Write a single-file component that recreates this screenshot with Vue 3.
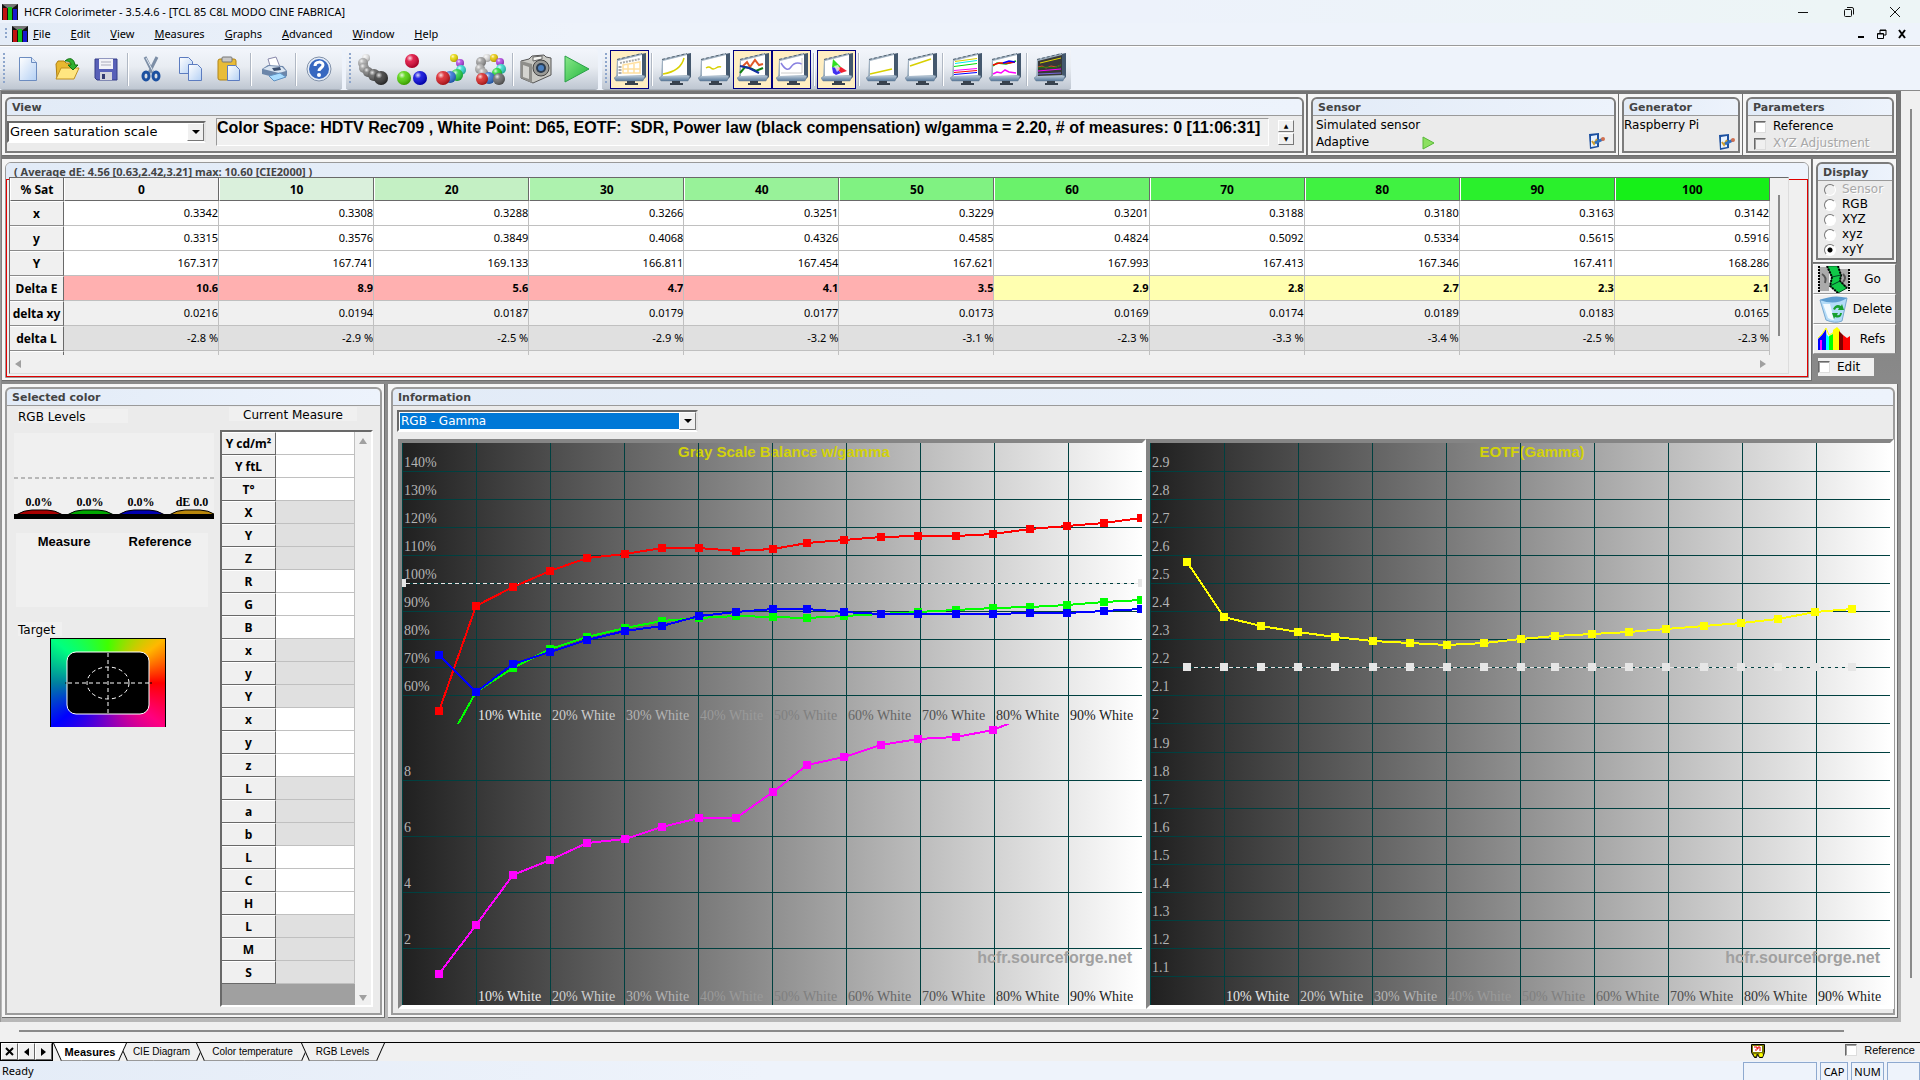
<script setup>
import { ref } from 'vue'

const menus = ['File', 'Edit', 'View', 'Measures', 'Graphs', 'Advanced', 'Window', 'Help']

const fileTools = ['new', 'open', 'save', '|', 'cut', 'copy', 'paste', '|', 'print', '|', 'help']
const measureTools = ['grays', 'primaries', 'secondaries', 'ring', '|', 'camera', 'play']
const graphTools = [
  { k: 'table', on: true }, { k: '|' }, { k: 'luminance' }, { k: 'gamma' },
  { k: 'levels', on: true }, { k: 'temperature', on: true }, { k: '|' },
  { k: 'cie', on: true }, { k: '|' }, { k: 'near black' }, { k: 'near white' }, { k: '|' },
  { k: 'saturation' }, { k: 'shift' }, { k: '|' }, { k: 'combined' },
]

const ball = {
  grays: [[8, 5, 4, '#e4e4e4'], [5, 10, 5, '#aaa'], [6, 15, 5, '#999'], [10, 19, 5, '#777'], [16, 22, 6, '#5a5a5a'], [23, 25, 7, '#333']],
  primaries: [[15, 8, 7, '#dc0032'], [7, 25, 7, '#4cd000'], [23, 25, 7, '#0000dc']],
  secondaries: [[18, 5, 4, '#e8d800'], [24, 10, 4, '#b040e0'], [25, 17, 5, '#30d8d0'], [21, 22, 6, '#20d040'], [14, 24, 6, '#2c70d8'], [7, 25, 7, '#d81820']],
  ring: [[12, 5, 4, '#ddd'], [19, 5, 4, '#e8c800'], [25, 9, 4, '#b040e0'], [6, 9, 5, '#999'], [5, 16, 5, '#aaa'], [26, 16, 5, '#30d8c8'], [8, 20, 5, '#aaa'], [22, 20, 5, '#20d830'], [14, 25, 6, '#3070d0'], [7, 26, 6, '#d82020'], [24, 26, 6, '#666']],
}

const sat = ['0', '10', '20', '30', '40', '50', '60', '70', '80', '90', '100']
const satColor = ['#f0f0f0', '#daf0dc', '#c4f0c4', '#adf2ae', '#98f299', '#80f282', '#6af26b', '#54f255', '#40f241', '#2af02c', '#16f018']
const dataRows = [
  { h: 'x', c: 'plain', v: ['0.3342', '0.3308', '0.3288', '0.3266', '0.3251', '0.3229', '0.3201', '0.3188', '0.3180', '0.3163', '0.3142'] },
  { h: 'y', c: 'plain', v: ['0.3315', '0.3576', '0.3849', '0.4068', '0.4326', '0.4585', '0.4824', '0.5092', '0.5334', '0.5615', '0.5916'] },
  { h: 'Y', c: 'plain', v: ['167.317', '167.741', '169.133', '166.811', '167.454', '167.621', '167.993', '167.413', '167.346', '167.411', '168.286'] },
  { h: 'Delta E', c: 'delta', v: ['10.6', '8.9', '5.6', '4.7', '4.1', '3.5', '2.9', '2.8', '2.7', '2.3', '2.1'] },
  { h: 'delta xy', c: 'light', v: ['0.0216', '0.0194', '0.0187', '0.0179', '0.0177', '0.0173', '0.0169', '0.0174', '0.0189', '0.0183', '0.0165'] },
  { h: 'delta L', c: 'dark', v: ['-2.8 %', '-2.9 %', '-2.5 %', '-2.9 %', '-3.2 %', '-3.1 %', '-2.3 %', '-3.3 %', '-3.4 %', '-2.5 %', '-2.3 %'] },
]

const display = ref('xyY')
const displayModes = ['Sensor', 'RGB', 'XYZ', 'xyz', 'xyY']

const measureRows = ['Y cd/m²', 'Y ftL', 'T°', 'X', 'Y', 'Z', 'R', 'G', 'B', 'x', 'y', 'Y', 'x', 'y', 'z', 'L', 'a', 'b', 'L', 'C', 'H', 'L', 'M', 'S']

const humps = [
  { x: 2, c: '#a80000', t: '0.0%' }, { x: 53, c: '#00a800', t: '0.0%' },
  { x: 104, c: '#0000b0', t: '0.0%' }, { x: 155, c: '#b8860b', t: 'dE 0.0' },
]

const xs = [37, 74, 111, 148, 185, 223, 260, 297, 334, 371, 405, 442, 479, 516, 554, 591, 628, 665, 702, 739]
const toPoints = (ys) => ys.map((y, i) => [xs[i], y])
const series = [
  { name: 'green', color: '#00ff00', clip: 'upper', p: toPoints([315, 249, 225, 206, 194, 185, 178, 175, 173, 174, 175, 173, 171, 169, 167, 165, 164, 162, 159, 157]) },
  { name: 'red', color: '#ff0000', clip: 'upper', p: toPoints([268, 163, 144, 128, 115, 111, 105, 105, 108, 106, 100, 97, 94, 93, 93, 91, 86, 83, 80, 75]) },
  { name: 'blue', color: '#0000ff', clip: 'upper', p: toPoints([212, 249, 221, 209, 197, 188, 183, 173, 169, 166, 166, 169, 171, 171, 171, 171, 170, 170, 168, 166]) },
  { name: 'delta', color: '#ff00ff', clip: 'lower', p: toPoints([531, 482, 432, 417, 400, 396, 384, 375, 375, 349, 322, 314, 302, 296, 294, 287, 272]) },
]
const gamma = toPoints([119, 174, 183, 189, 194, 198, 200, 202, 200, 196, 193, 191, 189, 186, 183, 180, 176, 169, 166])
const line = (p) => p.map((q) => q.join(',')).join(' ')

const percents = ['140%', '130%', '120%', '110%', '100%', '90%', '80%', '70%', '60%']
const deltas = ['8', '6', '4', '2']
const gammas = Array.from({ length: 19 }, (_, i) => String((29 - i) / 10))
const white = ['#e6e6e6', '#cdcdcd', '#b4b4b4', '#9a9a9a', '#808080', '#666', '#4d4d4d', '#333', '#1a1a1a']

const tabs = [
  { t: 'Measures', w: 74 }, { t: 'CIE Diagram', w: 85 },
  { t: 'Color temperature', w: 113 }, { t: 'RGB Levels', w: 83 },
]
</script>

<template>
  <div class="app">
    <svg class="defs" width="0" height="0" aria-hidden="true">
      <defs>
        <linearGradient id="bezel" x1="0" y1="0" x2="0" y2="1">
          <stop offset="0" stop-color="#c6d3df" /><stop offset="1" stop-color="#56779a" />
        </linearGradient>
        <linearGradient id="paper" x1="0" y1="0" x2="1" y2="1">
          <stop offset="0" stop-color="#fff" /><stop offset="1" stop-color="#b4d0f4" />
        </linearGradient>
        <linearGradient id="grayramp">
          <stop offset="0" stop-color="#202020" /><stop offset="1" stop-color="#fff" />
        </linearGradient>
        <linearGradient id="leaf" x1="0" y1="0" x2="1" y2="1">
          <stop offset="0" stop-color="#8ae88a" /><stop offset="1" stop-color="#1fb43a" />
        </linearGradient>
        <radialGradient id="shine" cx=".35" cy=".3" r=".7">
          <stop offset="0" stop-color="#fff" stop-opacity=".85" /><stop offset=".35" stop-color="#fff" stop-opacity=".15" />
          <stop offset="1" stop-color="#000" stop-opacity=".25" />
        </radialGradient>
      </defs>
    </svg>

    <header class="titlebar">
      <svg class="logo" width="16" height="16" viewBox="0 0 16 16"><rect width="16" height="16" fill="#111" /><path d="M0 0h16L8 6z" fill="#777" /><rect x="1" y="4" width="4" height="12" fill="#c01010" /><rect x="6" y="3" width="4" height="13" fill="#10c020" /><rect x="11" y="5" width="4" height="11" fill="#1818d0" /></svg>
      <span class="grow">HCFR Colorimeter - 3.5.4.6 - [TCL 85 C8L MODO CINE FABRICA]</span>
      <div class="winbtns">
        <button aria-label="Minimize"><svg width="12" height="12"><path d="M1 6.5h10" stroke="#111" /></svg></button>
        <button aria-label="Restore"><svg width="12" height="12"><rect x="1.5" y="3.5" width="7" height="7" rx="1" fill="none" stroke="#111" /><path d="M4 1.5h5q1.5 0 1.5 1.5v5.5" fill="none" stroke="#111" /></svg></button>
        <button aria-label="Close"><svg width="12" height="12"><path d="M1 1l10 10M11 1L1 11" stroke="#111" /></svg></button>
      </div>
    </header>

    <nav class="menubar">
      <i class="grip short"></i>
      <svg class="logo" width="16" height="16" viewBox="0 0 16 16"><rect width="16" height="16" fill="#111" /><path d="M0 0h16L8 6z" fill="#777" /><rect x="1" y="4" width="4" height="12" fill="#c01010" /><rect x="6" y="3" width="4" height="13" fill="#10c020" /><rect x="11" y="5" width="4" height="11" fill="#1818d0" /></svg>
      <button v-for="m in menus" :key="m" class="menu"><u>{{ m[0] }}</u>{{ m.slice(1) }}</button>
      <span class="grow"></span>
      <div class="mdi">
        <button aria-label="Minimize document"><svg width="10" height="10"><path d="M1 8h6" stroke="#000" stroke-width="2" /></svg></button>
        <button aria-label="Restore document"><svg width="10" height="10"><path d="M3 4V1h6v5H7M3 1.5h6" stroke="#000" fill="none" /><path d="M.5 4.5h6v5h-6zM.5 5h6" stroke="#000" fill="none" /></svg></button>
        <button aria-label="Close document"><svg width="10" height="10"><path d="M2 1l6 8M8 1L2 9" stroke="#000" stroke-width="2" /></svg></button>
      </div>
    </nav>

    <div class="toolrow">
      <div class="band">
        <i class="grip"></i>
        <template v-for="(k, i) in fileTools" :key="i">
          <i v-if="k === '|'" class="sep"></i>
          <button v-else class="tool" :aria-label="k">
            <svg width="26" height="26" viewBox="0 0 26 26">
              <g v-if="k === 'new'"><path d="M4.5 1.5h12l5 5v18h-17z" fill="url(#paper)" stroke="#6c8cc0" /><path d="M16.5 1.5v5h5" fill="#dbe8fa" stroke="#6c8cc0" /></g>
              <g v-else-if="k === 'open'"><path d="M2 8l2-3h6l2 2h8v15H3z" fill="#e8b830" stroke="#b08010" /><path d="M2 23l5-11h18l-5 11z" fill="#ffe680" stroke="#c09020" /><path d="M11 5c4-4 9-3 10 4h3l-5 5-5-5h3c0-3-2-4-6-4z" fill="#30b030" stroke="#107010" /></g>
              <g v-else-if="k === 'save'"><path d="M2 3h22v21H4l-2-2z" fill="#5860b8" stroke="#343c88" /><rect x="6" y="3" width="14" height="10" fill="#f2f2f8" /><path d="M8 6h10M8 9h10" stroke="#aab" /><rect x="7" y="16" width="12" height="8" fill="#d4d4dc" /><rect x="9" y="18" width="3" height="5" fill="#333a70" /></g>
              <g v-else-if="k === 'cut'" fill="none"><path d="M7 1l8 16M19 1l-8 16" stroke="#7c8ea6" stroke-width="3" /><path d="M8 2l8 15" stroke="#dde6f0" /><ellipse cx="8" cy="20" rx="3" ry="4" stroke="#1c50a0" stroke-width="3" /><ellipse cx="18" cy="20" rx="3" ry="4" stroke="#1c50a0" stroke-width="3" /></g>
              <g v-else-if="k === 'copy'" stroke="#5c7cc0"><path d="M2.5 1.5h9l4 4v12h-13z" fill="url(#paper)" /><path d="M11.5 8.5h9l4 4v12h-13z" fill="url(#paper)" /></g>
              <g v-else-if="k === 'paste'"><rect x="2" y="3" width="18" height="21" rx="2" fill="#e8bc38" stroke="#b08418" /><rect x="6" y="1" width="10" height="5" rx="1" fill="#c8c8c8" stroke="#777" /><path d="M11.5 9.5h8l4 4v11h-12z" fill="url(#paper)" stroke="#5c7cc0" /></g>
              <g v-else-if="k === 'print'"><path d="M7 3l8-2 4 10-9 2z" fill="#fff" stroke="#88a" /><path d="M1 13l6-4 15 1 4 5v5l-6 3-19-5z" fill="#6c86aa" /><path d="M2 13l6-3 13 1 4 4-7 2z" fill="#dbe6f2" /><path d="M11 12l8-1 1 3-7 1z" fill="#3c5070" /><path d="M8 20l11-3 6 4-12 4z" fill="#a8dcff" stroke="#6090c0" /></g>
              <g v-else><circle cx="13" cy="13" r="12" fill="#e6edf7" stroke="#8090a8" /><circle cx="13" cy="13" r="10" fill="#3868c0" /><path d="M9 10c0-5 8-5 8-1 0 3-4 3-4 6" fill="none" stroke="#fff" stroke-width="3" /><circle cx="13" cy="19" r="2" fill="#fff" /></g>
            </svg>
          </button>
        </template>
      </div>
      <div class="band">
        <i class="grip"></i>
        <template v-for="(k, i) in measureTools" :key="i">
          <i v-if="k === '|'" class="sep"></i>
          <button v-else class="tool" :aria-label="k">
            <svg width="32" height="32" viewBox="0 0 32 32">
              <g v-if="ball[k]"><template v-for="(b, j) in ball[k]" :key="j"><circle :cx="b[0]" :cy="b[1]" :r="b[2]" :fill="b[3]" /><circle :cx="b[0]" :cy="b[1]" :r="b[2]" fill="url(#shine)" /></template></g>
              <g v-else-if="k === 'camera'"><path d="M1 8l8-2 3-3 12-1 2 2 5 1v17l-18 8-12-5z" fill="#c9c9c4" stroke="#555" /><path d="M1 8l11 3v19L1 25z" fill="#8e8e8a" /><path d="M3 12l6 2v12l-6-2z" fill="#d4d4d0" /><path d="M13 4l9-1v3l-9 2z" fill="#f4f4f0" stroke="#666" /><circle cx="21" cy="15" r="8" fill="#9a9a96" stroke="#444" /><circle cx="21" cy="15" r="5" fill="#2c3c50" /><circle cx="21" cy="15" r="3" fill="#4a80c0" /></g>
              <path v-else d="M6 3l24 13L6 29z" fill="url(#leaf)" stroke="#2aa048" />
            </svg>
          </button>
        </template>
      </div>
      <div class="band">
        <i class="grip"></i>
        <template v-for="(g, i) in graphTools" :key="i">
          <i v-if="g.k === '|'" class="sep"></i>
          <button v-else class="tool" :class="{ on: g.on }" :aria-label="g.k + ' graph'">
            <svg width="32" height="32" viewBox="0 0 32 32">
              <path d="M27 1l5-1v24l-4 4z" fill="#44586e" />
              <path d="M3 6l25-6v24l-26 2z" fill="#9fb0c0" />
              <path d="M3 6.5L28 .5" stroke="#566573" stroke-dasharray="3 2" />
              <path d="M0 25l4-3h24l3 1-2 5H2z" fill="url(#bezel)" stroke="#6a8097" stroke-width=".5" />
              <path d="M13 28h8v2h3v2H11v-2h2z" fill="#38424e" />
              <path d="M4 8l24-6v20l-24 1z" :fill="g.k === 'combined' ? '#383838' : '#fff'" />
              <g fill="none" stroke-width="1.5">
                <g v-if="g.k === 'table'"><path d="M6 10l20-4" stroke="#aaa" stroke-width="2" stroke-dasharray="2 1" /><path d="M6 13v8" stroke="#aaa" stroke-width="3" stroke-dasharray="2 1" /><path d="M9 12l17-3v11H9zM9 16h17M14 11v9M20 10v10" stroke="#ffdfa0" /></g>
                <path v-else-if="g.k === 'luminance'" d="M4 21q18-3 21-16" stroke="#d8d000" />
                <path v-else-if="g.k === 'gamma'" d="M8 15q3-2 5 0t5 0 5-1" stroke="#d8d000" />
                <g v-else-if="g.k === 'levels'" stroke-width="2"><path d="M3 20l5-6 5 1 6 3 7-3" stroke="#108010" /><path d="M5 14l5-5 3 5 5-7 4 5 4-1" stroke="#e05828" /><path d="M3 13l9 2 10 5" stroke="#1030a0" /></g>
                <g v-else-if="g.k === 'temperature'"><path d="M5 10q6 10 10 4t11-3" stroke="#8880e0" /><path d="M5 20h21V5" stroke="#ccc" stroke-width="1" /></g>
                <g v-else-if="g.k === 'cie'" stroke="none"><path d="M12 6l8 8-5 1-4-1z" fill="#30e020" /><path d="M20 14l6 4-6 2-5-5z" fill="#f02030" /><path d="M11 14l4 1 5 5-5 2-3-2z" fill="#4030f0" /><path d="M13 13l4-1 2 4-3 3z" fill="#fff" opacity=".7" /></g>
                <path v-else-if="g.k === 'near black'" d="M4 21l22-5" stroke="#d8d000" />
                <path v-else-if="g.k === 'near white'" d="M5 13l21-7" stroke="#d8d000" />
                <g v-else-if="g.k === 'saturation'" stroke-width="1"><path d="M5 8.5l22-3" stroke="#d8d000" /><path d="M5 10.5l22-3" stroke="#0ee" /><path d="M4 13.5l23-3" stroke="#0d0" /><path d="M4 17.5l23-2" stroke="#f0f" /><path d="M4 19.5l23-2" stroke="#f00" /><path d="M4 21.5l23-2" stroke="#00f" /></g>
                <g v-else-if="g.k === 'shift'"><path d="M4 13l4-3 9 1 10-3" stroke="#0c0" /><path d="M4 12l6-2h10l6-1" stroke="#f00" /><path d="M14 10l6-2 6 1" stroke="#00f" /><path d="M4 21l4-2 4 1 4-3 4 2 7 1" stroke="#f0f" /></g>
                <g v-else stroke-width="1"><path d="M6 10l21-5" stroke="#e0d800" /><path d="M4 14l4-1 4 2 5-2 5 1 5-2" stroke="#d05020" /><path d="M4 15l8-1 8 1 7-3" stroke="#108010" /><path d="M4 18l23-2" stroke="#f0f" /><path d="M4 21l23-1" stroke="#7868e0" /></g>
              </g>
            </svg>
          </button>
        </template>
      </div>
    </div>

    <div class="work">
      <div class="desk">
        <main class="panes">
          <div class="row top">
            <section class="frame grow">
              <div class="group">
                <h2>View</h2>
                <div class="viewbody">
                  <div class="combo"><select aria-label="View"><option>Green saturation scale</option></select><i></i></div>
                  <output class="status">Color Space: HDTV Rec709 , White Point: D65, EOTF:&nbsp; SDR, Power law (black compensation) w/gamma = 2.20, # of measures: 0 [11:06:31]</output>
                  <div class="spin"><button aria-label="Previous">▲</button><button aria-label="Next">▼</button></div>
                </div>
              </div>
            </section>
            <section class="frame sensor">
              <div class="group">
                <h2>Sensor</h2>
                <div class="lines"><p>Simulated sensor</p><p>Adaptive<svg class="go" width="14" height="14"><path d="M1 1l11 6-11 6z" fill="#8ce060" stroke="#58b838" /></svg></p></div>
                <button class="cfg" aria-label="Configure sensor"><svg width="18" height="18"><path d="M2 2l10-1v14l-9 2z" fill="#1c50a0" /><path d="M4 4l6-1v11l-6 1z" fill="#e8f2ff" /><path d="M5 9l2 3 3-5" stroke="#d0a030" stroke-width="2" fill="none" /><path d="M8 11l8-4" stroke="#3070c0" stroke-width="3" /><circle cx="16" cy="7" r="2" fill="#d07050" /></svg></button>
              </div>
            </section>
            <section class="frame generator">
              <div class="group">
                <h2>Generator</h2>
                <div class="lines tight"><p>Raspberry Pi</p></div>
                <button class="cfg" aria-label="Configure generator"><svg width="18" height="18"><path d="M2 2l10-1v14l-9 2z" fill="#1c50a0" /><path d="M4 4l6-1v11l-6 1z" fill="#e8f2ff" /><path d="M5 9l2 3 3-5" stroke="#d0a030" stroke-width="2" fill="none" /><path d="M8 11l8-4" stroke="#3070c0" stroke-width="3" /><circle cx="16" cy="7" r="2" fill="#d07050" /></svg></button>
              </div>
            </section>
            <section class="frame params">
              <div class="group">
                <h2>Parameters</h2>
                <div class="checks">
                  <label><input type="checkbox" />Reference</label>
                  <label class="off"><input type="checkbox" disabled />XYZ Adjustment</label>
                </div>
              </div>
            </section>
          </div>

          <div class="row center">
            <section class="frame grow">
              <div class="group thin">
                <h2>( Average dE: 4.56 [0.63,2.42,3.21] max: 10.60 [CIE2000] )</h2>
                <div class="redbox">
                  <div class="gridbox">
                    <div class="gridmain">
                      <table class="data">
                        <thead>
                          <tr><th class="rh">% Sat</th><th v-for="(s, i) in sat" :key="s" :style="{ background: satColor[i] }">{{ s }}</th></tr>
                        </thead>
                        <tbody>
                          <tr v-for="r in dataRows" :key="r.h" :class="r.c">
                            <th>{{ r.h }}</th>
                            <td v-for="(v, i) in r.v" :key="i" :class="{ warn: r.c === 'delta' && i > 5 }">{{ v }}</td>
                          </tr>
                          <tr class="light stub"><th></th><td v-for="s in sat" :key="s"></td></tr>
                        </tbody>
                      </table>
                      <div class="hbar"><i class="al"></i><i class="ar"></i></div>
                    </div>
                    <div class="vbar"><i></i></div>
                  </div>
                </div>
              </div>
            </section>
            <aside class="side">
              <section class="frame">
                <div class="group">
                  <h2>Display</h2>
                  <div class="radios">
                    <label v-for="d in displayModes" :key="d" :class="{ off: d === 'Sensor' }"><input v-model="display" type="radio" name="display" :value="d" :disabled="d === 'Sensor'" />{{ d }}</label>
                  </div>
                </div>
              </section>
              <button class="act"><svg width="32" height="27" viewBox="0 0 32 27"><path d="M1 1h10v24H1z" fill="#aaa" /><path d="M22 3h9v20h-9z" fill="#aaa" /><path d="M1 0v26M31 3v22" stroke="#000" stroke-width="2" stroke-dasharray="2 1" /><path d="M4 8q5 3 3 9M25 8q4 4 0 8" stroke="#555" fill="none" stroke-width="2" /><path d="M9 0h11l3 9-1 6 7 7-9 5-8-7 2-9z" fill="#10c848" stroke="#052" /><path d="M9 0l5 11-2 9 8 7M20 0l3 9-1 6 7 7" fill="none" stroke="#000" stroke-width="2" stroke-dasharray="2 1" /><path d="M14 11l9-2M12 20l10-5" stroke="#042" /></svg><span>Go</span></button>
              <button class="act"><svg width="32" height="27" viewBox="0 0 32 27"><path d="M2 4l6 20q9 4 16 1l5-23z" fill="#b4dcf8" stroke="#78a8d0" /><path d="M2 4Q16-2 29 2q-12 8-27 2z" fill="#5c9cd0" /><path d="M5 8l5 14q3 2 6 2L12 8z" fill="#f2faff" /><path d="M15 13q3-6 8-3l1-2 2 6h-6l1-2q-3-1-4 2zM24 17q-1 6-7 4l-1 2-2-6h6l-1 2q3 1 3-2z" fill="#18a030" /></svg><span>Delete</span></button>
              <button class="act"><svg width="32" height="27" viewBox="0 0 32 27"><path d="M0 24V13l4-4v15" fill="#00f" /><path d="M2 14h2v10H2z" fill="#f0f" /><path d="M4 24V9l4-6 1 21z" fill="#00f" /><path d="M8 24V8l3 3v13z" fill="#0ff" /><path d="M11 24V10l4-2v16z" fill="#0f0" /><path d="M15 24V4l4-3 3 3v20z" fill="#ff0" /><path d="M21 24V5l4 4v15z" fill="#800000" /><path d="M25 24V9l4 3 3-2v14z" fill="#f00" /><path d="M0 12l4-4 4-6 3 7 4-2 2-4" stroke="#ff0" fill="none" /></svg><span>Refs</span></button>
              <label class="edit"><input type="checkbox" />Edit</label>
            </aside>
          </div>

          <div class="row low">
            <section class="frame selected">
              <div class="group soft">
                <h2>Selected color</h2>
                <div class="selbody">
                  <div class="selleft">
                    <p class="tag wide">RGB Levels</p>
                    <svg class="levels" width="200" height="86" viewBox="0 0 200 86">
                      <rect width="200" height="86" fill="#f0f0f0" />
                      <path d="M0 45h200" stroke="#808080" stroke-dasharray="4 3" />
                      <template v-for="h in humps" :key="h.x">
                        <path :d="`M${h.x} 82q8-5 16-5h15q8 0 16 5z`" :fill="h.c" stroke="#000" />
                        <text :x="h.x + 23" y="73" text-anchor="middle" font-size="12">{{ h.t }}</text>
                      </template>
                      <rect y="81" width="200" height="5" />
                    </svg>
                    <div class="pair"><b>Measure</b><b>Reference</b></div>
                    <p class="tag">Target</p>
                    <div class="target">
                      <svg width="114" height="88" viewBox="1 0 114 88">
                        <path d="M15 44h87" stroke="#000" />
                        <rect x="17" y="13" width="82" height="62" rx="9" fill="#000" stroke="#fff" />
                        <g fill="none" stroke="#fff" stroke-dasharray="4 3"><path d="M58 14v61M18 44h81" /><ellipse cx="58" cy="44" rx="21" ry="16" /></g>
                      </svg>
                    </div>
                  </div>
                  <div class="selright">
                    <p class="tag current">Current Measure</p>
                    <div class="mbox">
                      <div class="mmain">
                        <table class="meas">
                          <tbody><tr v-for="(m, i) in measureRows" :key="i" :class="{ dim: Math.floor(i / 3) % 2 }"><th>{{ m }}</th><td></td></tr></tbody>
                        </table>
                      </div>
                      <div class="mscroll"><i class="up"></i><i class="down"></i></div>
                    </div>
                  </div>
                </div>
              </div>
            </section>

            <section class="frame grow">
              <div class="group soft">
                <h2>Information</h2>
                <div class="infobody">
                  <div class="combo info"><select aria-label="Graph"><option>RGB - Gamma</option></select><i></i></div>
                  <div class="charts">
                    <div class="chart">
                      <svg viewBox="0 0 740 562">
                        <defs>
                          <clipPath id="upper"><rect width="740" height="281" /></clipPath>
                          <clipPath id="lower"><rect y="281" width="740" height="281" /></clipPath>
                        </defs>
                        <rect width="740" height="562" fill="url(#grayramp)" />
                        <text class="ttl" x="382" y="14" text-anchor="middle">Gray Scale Balance w/gamma</text>
                        <g class="net">
                          <rect v-for="n in 10" :key="'v' + n" :x="(n - 1) * 74" y="0" width="1" height="562" />
                          <rect v-for="n in 9" :key="'h' + n" x="0" :y="n * 28" width="740" height="1" />
                          <rect v-for="n in 4" :key="'d' + n" x="0" :y="281 + n * 56" width="740" height="1" />
                        </g>
                        <path d="M4 140.5H740" stroke="#e6e6e6" stroke-dasharray="4 3" />
                        <rect x="0" y="136" width="4" height="8" fill="#e6e6e6" /><rect x="736" y="136" width="4" height="8" fill="#e6e6e6" />
                        <text v-for="(p, i) in percents" :key="p" class="ax" x="2" :y="24 + i * 28">{{ p }}</text>
                        <text v-for="(p, i) in deltas" :key="p" class="ax" x="2" :y="333 + i * 56">{{ p }}</text>
                        <template v-for="(c, i) in white" :key="c">
                          <text class="wx" :x="76 + i * 74" y="277" :fill="c">{{ i + 1 }}0% White</text>
                          <text class="wx" :x="76 + i * 74" y="558" :fill="c">{{ i + 1 }}0% White</text>
                        </template>
                        <text class="mark" x="730" y="520" text-anchor="end">hcfr.sourceforge.net</text>
                        <g v-for="s in series" :key="s.name" :clip-path="`url(#${s.clip})`" :fill="s.color">
                          <polyline :points="line(s.p)" fill="none" :stroke="s.color" stroke-width="2" shape-rendering="crispEdges" />
                          <rect v-for="(q, i) in s.p" :key="i" :x="q[0] - 4" :y="q[1] - 4" width="8" height="8" />
                        </g>
                      </svg>
                    </div>
                    <div class="chart">
                      <svg viewBox="0 0 740 562">
                        <rect width="740" height="562" fill="url(#grayramp)" />
                        <text class="ttl" x="382" y="14" text-anchor="middle">EOTF(Gamma)</text>
                        <g class="net">
                          <rect v-for="n in 10" :key="'v' + n" :x="(n - 1) * 74" y="0" width="1" height="562" />
                          <rect v-for="n in 19" :key="'h' + n" x="0" :y="n * 28 + (n > 10 ? 1 : 0)" width="740" height="1" />
                        </g>
                        <text v-for="(p, i) in gammas" :key="p" class="ax" x="2" :y="24 + i * 28 + (i > 9 ? 1 : 0)">{{ p }}</text>
                        <text v-for="(c, i) in white" :key="c" class="wx" :x="76 + i * 74" y="558" :fill="c">{{ i + 1 }}0% White</text>
                        <text class="mark" x="730" y="520" text-anchor="end">hcfr.sourceforge.net</text>
                        <path d="M37 224.5H702" stroke="#e6e6e6" stroke-dasharray="4 3" />
                        <rect v-for="(q, i) in gamma" :key="'w' + i" :x="q[0] - 4" y="220" width="8" height="8" fill="#e6e6e6" />
                        <polyline :points="line(gamma)" fill="none" stroke="#ff0" stroke-width="2" shape-rendering="crispEdges" />
                        <rect v-for="(q, i) in gamma" :key="'y' + i" :x="q[0] - 4" :y="q[1] - 4" width="8" height="8" fill="#ff0" />
                      </svg>
                    </div>
                  </div>
                </div>
              </div>
            </section>
          </div>
        </main>
        <div class="hscroll"><i></i></div>
      </div>
      <div class="vscroll"><i></i></div>
    </div>

    <div class="tabbar">
      <div class="nav"><button aria-label="Close tab"><svg width="9" height="9"><path d="M1 1l7 7M8 1L1 8" stroke="#000" stroke-width="2" /></svg></button><button aria-label="Previous tab"><i class="pl"></i></button><button aria-label="Next tab"><i class="pr"></i></button></div>
      <button v-for="(t, i) in tabs" :key="t.t" class="tab" :class="{ active: i === 0 }" :style="{ width: t.w + 'px' }"><span>{{ t.t }}</span></button>
      <span class="grow"></span>
      <svg class="mini" width="14" height="14" viewBox="0 0 14 14"><path d="M.5.5h13v8l-2 5h-3l-2-3-1 3h-2l-3-5z" fill="#7a7a00" stroke="#000" /><rect x="2" y="2" width="9" height="6" fill="#fff" /><path d="M3 3h3v2h1V3h2v4M4 6h2" stroke="#e00" fill="none" /><circle cx="10" cy="11" r="2" fill="#ff0" /><circle cx="4" cy="11" r="1" fill="#ff0" /></svg>
      <label class="ref"><input type="checkbox" />Reference</label>
    </div>

    <footer class="statusbar">
      <span class="grow">Ready</span>
      <span class="cell big"></span><span class="cell cap">CAP</span><span class="cell num">NUM</span><span class="cell end"></span>
    </footer>
  </div>
</template>

<style>
html, body { margin: 0; background: #eef3fb; }
</style>

<style scoped>
* { box-sizing: border-box; }
.app { --ui: "Noto Sans", "Open Sans", sans-serif; --ver: "DejaVu Sans", sans-serif; --ari: "Liberation Sans", Arial, sans-serif;
  display: flex; flex-direction: column; min-height: 100vh; font: 12px/16px var(--ui); color: #000; background: #eef3fb; }
button { font: inherit; color: inherit; background: none; border: 0; padding: 0; margin: 0; display: flex; align-items: center; justify-content: center; }
.defs { position: absolute; }
.grow { flex: 1; min-width: 0; }
p, h2 { margin: 0; }

.titlebar { display: flex; align-items: center; height: 23px; padding: 0 2px; gap: 6px; background: linear-gradient(90deg, #edf2fb 60%, #edf5f6 95%); font-size: 11px; }
.winbtns { display: flex; }
.winbtns button { width: 46px; height: 20px; }
.menubar { display: flex; align-items: center; height: 23px; padding-left: 5px; border-bottom: 1px solid #9a9a9a; background: linear-gradient(90deg, #e4ecf7, #eef3fb 30%); font-size: 11px; }
.menubar .logo { margin: 0 -5px 0 5px; }
.menu { display: block; height: 18px; padding: 0 10px; }
.mdi { display: flex; padding-right: 8px; }
.mdi button { width: 20px; height: 18px; }

.toolrow { display: flex; gap: 4px; height: 44px; padding: 2px 0 0; border-top: 1px solid #fff; }
.band { display: flex; align-items: center; height: 41px; padding-right: 2px; border-radius: 3px; border-bottom: 1px solid #aab2bd; background: linear-gradient(#f2f5fb, #e8ecf2 45%, #bfc7d2); }
.band:first-child { width: 342px; }
.band:nth-child(2) { width: 252px; }
.grip { flex: none; width: 2px; height: 32px; margin: 0 3px; background: repeating-linear-gradient(#8ea6cc 0 2px, transparent 2px 4px); }
.grip.short { height: 12px; margin: 0; }
.tool { width: 39px; height: 39px; }
.tool.on { background: #ffeec2; border: 1px solid #000080; }
.sep { width: 2px; height: 33px; margin: 0 2px; border-left: 1px solid #b0b8c4; border-right: 1px solid #fff; }

.work { display: flex; flex: 1; border-top: 1px solid #8a8a8a; }
.desk { flex: 1; min-width: 0; display: flex; flex-direction: column; }
.panes { flex: 1; display: flex; flex-direction: column; gap: 3px; padding: 3px 3px 4px 1px; border-left: 1px solid #9a9a9a; background: linear-gradient(#747474, #8c8c8c 35%, #b8b8b8); }
.row { display: flex; }
.frame { background: #f6f6f6; padding: 3px 2px 2px 3px; border-right: 1px solid #6e6e6e; border-bottom: 1px solid #6e6e6e; display: flex; }
.group { position: relative; flex: 1; min-width: 0; display: flex; flex-direction: column; border: 2px solid #7c7c7c; border-radius: 6px 6px 0 0; background: #ebebeb; }
.group.soft { border-color: #9c9c9c; }
.group.thin { border-width: 1px; border-color: #999; background: #f0f0f0; }
h2 { flex: none; height: 17px; padding-left: 5px; border-bottom: 1px solid #9a9a9a; border-radius: 5px 5px 0 0; background: linear-gradient(90deg, #e2ebf7, #edf3fc); color: #444; font: bold 11px/18px var(--ver); white-space: nowrap; }

.top { height: 62px; padding-right: 1px; }
.sensor { width: 311px; margin-left: 1px; }
.generator { width: 124px; }
.params { width: 154px; }
.viewbody { display: flex; align-items: flex-start; gap: 10px; padding: 2px 8px 0 0; }
.combo { position: relative; flex: none; width: 199px; height: 22px; margin-top: 3px; border: 2px solid; border-color: #696969 #e3e3e3 #fff #696969; background: #fff; }
.combo select { appearance: none; display: block; width: 100%; height: 100%; border: 0; border-radius: 0; padding: 0 20px 0 1px; background: #fff; color: #000; font: 13px/18px var(--ver); outline: 0; }
.combo i { position: absolute; right: 0; top: 0; bottom: 0; width: 17px; border: 1px solid; border-color: #fff #777 #777 #fff; background: #f0f0f0; pointer-events: none; }
.combo i::after { content: ""; position: absolute; left: 4px; top: 6px; border: 4px solid transparent; border-top-color: #000; border-bottom: 0; }
.status { flex: 1; min-width: 0; height: 28px; border: 1px solid; border-color: #9a9a9a #fff #fff #9a9a9a; background: #f0f0f0; font: bold 16px/18px var(--ari); white-space: nowrap; overflow: hidden; }
.spin { display: flex; flex-direction: column; gap: 1px; margin: 2px 0 0 -1px; }
.spin button { width: 16px; height: 12px; border: 1px solid; border-color: #fff #777 #777 #fff; background: #f0f0f0; font: 6px/8px var(--ver); }
.lines { padding: 1px 0 0 3px; font: 12px/17px var(--ver); }
.lines.tight { padding-left: 0; }
.lines p { display: flex; align-items: center; }
.go { margin-left: 53px; }
.cfg { position: absolute; right: 9px; bottom: 1px; }
.generator .cfg { right: 3px; bottom: 0; }
.checks { display: flex; flex-direction: column; padding: 2px 0 0 6px; font: 12px/17px var(--ver); }
label { display: flex; align-items: center; white-space: nowrap; }
input { appearance: none; flex: none; margin: 0; }
input[type="checkbox"] { width: 12px; height: 12px; margin-right: 7px; border: 1px solid; border-color: #696969 #ddd #ddd #696969; box-shadow: inset 1px 1px #a0a0a0; background: #fff; }
input[type="checkbox"]:disabled { background: #f0f0f0; }
.off { color: #a8a8a8; text-shadow: 1px 1px #fff; }

.center { height: 222px; gap: 1px; padding-right: 1px; }
.thin h2 { height: 16px; font: bold 11px/18px var(--ui); padding-left: 8px; border-bottom: 0; }
.redbox { flex: 1; border: 1px solid #e00000; padding-left: 2px; padding-right: 18px; display: flex; }
.gridbox { flex: 1; display: flex; height: 197px; margin-top: -3px; border: 1px solid; border-color: #696969 #ddd #ddd #696969; background: #f0f0f0; z-index: 1; }
.gridmain { flex: 1; }
.data { width: 100%; table-layout: fixed; border-collapse: separate; border-spacing: 0; }
.data th, .data td { height: 25px; padding: 0; line-height: 16px; }
.data thead th { height: 23px; padding-top: 2px; border-right: 1px solid #696969; border-bottom: 1px solid #696969; border-left: 1px solid #fff; }
.data .rh { width: 54px; background: #f0f0f0; }
.data tbody th { background: #f0f0f0; border-right: 1px solid #696969; border-bottom: 1px solid #8a8a8a; border-top: 1px solid #fff; }
.data td { border-right: 1px solid #c0c0c0; border-bottom: 1px solid #c0c0c0; text-align: right; font-size: 11px; }
.plain td { background: #fff; }
.light td { background: #f0f0f0; }
.dark td { background: #e0e0e0; }
.delta td { background: #ffb0b0; font-weight: bold; }
.delta td.warn { background: #ffffb0; }
.data .stub th, .data .stub td { height: 4px; border-bottom: 0; line-height: 0; }
.hbar { height: 18px; padding: 0 4px 0 5px; display: flex; justify-content: space-between; align-items: center; }
.al { border: 4px solid transparent; border-right: 6px solid #a0a0a0; border-left: 0; }
.ar { border: 4px solid transparent; border-left: 6px solid #a0a0a0; border-right: 0; }
.vbar { width: 18px; padding-top: 17px; display: flex; justify-content: center; }
.vbar i { width: 2px; height: 141px; background: #8a8a8a; }

.side { width: 84px; display: flex; flex-direction: column; }
.side .frame { height: 104px; margin-bottom: 1px; }
.radios { display: flex; flex-direction: column; font: 12px/15px var(--ver); padding: 1px 0 0 6px; }
input[type="radio"] { width: 12px; height: 12px; margin-right: 6px; border-radius: 50%; border: 1px solid; border-color: #777 #fff #fff #777; background: #fff; }
input[type="radio"]:disabled { background: #f0f0f0; }
input[type="radio"]:checked { background: radial-gradient(circle, #000 2px, #fff 3px); }
.act { height: 30px; justify-content: flex-start; margin-right: 1px; padding-left: 4px; border: 1px solid; border-color: #fff #777 #999 #fff; background: #efefef; font: 12px/16px var(--ver); }
.act span { flex: 1; text-align: center; }
.edit { width: 56px; height: 18px; margin: 4px 0 0 5px; background: #f0f0f0; font: 12px/18px var(--ver); }

.low { gap: 3px; flex: 1; }
.selected { width: 383px; }
.selbody { display: flex; flex: 1; }
.selleft { width: 213px; padding: 3px 0 0 7px; }
.tag { width: 44px; height: 14px; margin-left: 4px; background: #f0f0f0; font: 12px/16px var(--ver); white-space: nowrap; }
.tag.wide { width: 110px; }
.tag.current { width: 128px; margin-left: 9px; text-align: center; }
.levels { display: block; margin: 10px 0 14px; font-family: "Liberation Serif", serif; font-weight: bold; }
.pair { display: flex; width: 192px; height: 74px; margin: 0 0 15px 2px; padding-top: 1px; background: #f0f0f0; font: 13px/16px var(--ari); }
.pair b { flex: 1; text-align: center; }
.target { width: 116px; height: 89px; margin: 2px 0 0 36px; border: 1px solid #000; border-bottom: 0;
  background: conic-gradient(#40ff00, #ffb800 52deg, #f00 90deg, #ff0080 128deg, #8000c0 180deg, #00f 232deg, #0080a0 270deg, #00ff80 308deg, #40ff00); }
.target svg { display: block; }
.selright { flex: 1; padding-top: 1px; display: flex; flex-direction: column; }
.mbox { display: flex; width: 153px; height: 577px; margin: 9px 0 0; border: 2px solid; border-color: #696969 #fff #fff #696969; background: #f0f0f0; }
.mmain { flex: 1; background: #a0a0a0; }
.meas { width: 100%; border-spacing: 0; table-layout: fixed; }
.meas th, .meas td { height: 23px; padding: 0; line-height: 16px; }
.meas th { width: 54px; background: #f0f0f0; border-right: 1px solid #696969; border-bottom: 1px solid #696969; border-top: 1px solid #fff; white-space: nowrap; }
.meas td { background: #fff; border-right: 1px solid #c0c0c0; border-bottom: 1px solid #c0c0c0; }
.meas .dim td { background: #e0e0e0; }
.mscroll { width: 16px; display: flex; flex-direction: column; justify-content: space-between; align-items: center; padding: 6px 0 4px; }
.up { border: 4px solid transparent; border-bottom: 6px solid #a0a0a0; border-top: 0; }
.down { border: 4px solid transparent; border-top: 6px solid #a0a0a0; border-bottom: 0; }

.infobody { padding: 4px 0 4px 5px; }
.combo.info { width: 301px; margin: 0 0 7px -1px; }
.combo.info select { background: #0078d7; color: #fff; border: 1px solid #fff; border-right-width: 17px; font-size: 12px; line-height: 16px; }
.charts { display: flex; margin-right: -1px; }
.chart { flex: 1; min-width: 0; border: 4px solid; border-color: #858585 #fff #fff #858585; }
.chart svg { display: block; width: 100%; height: auto; font-family: "Liberation Serif", serif; }
.net { fill: #004040; shape-rendering: crispEdges; }
.ttl { font: bold 15px var(--ari); fill: #d2d20a; }
.mark { font: bold 16px var(--ari); fill: #a0a0a0; }
.ax { font-size: 14px; fill: #b4b4b4; }
.wx { font-size: 14px; }

.hscroll { height: 20px; padding: 8px 57px 0 19px; background: #f0f0f0; }
.hscroll i { display: block; height: 2px; background: #8a8a8a; }
.vscroll { width: 19px; padding: 18px 0 64px 9px; background: #f0f0f0; }
.vscroll i { display: block; width: 2px; height: 100%; background: #8a8a8a; }

.tabbar { display: flex; align-items: flex-start; height: 19px; border-top: 1px solid #000; background: #f0f0f0; font: 10px/18px var(--ari); }
.nav { display: flex; border-right: 1px solid #000; border-left: 1px solid #000; border-bottom: 1px solid #000; }
.nav button { width: 17px; height: 17px; border: 1px solid; border-color: #fff #666 #666 #fff; }
.nav i { border: 4px solid transparent; }
.nav .pl { border-right: 5px solid #000; border-left: 0; }
.nav .pr { border-left: 5px solid #000; border-right: 0; }
.tab { position: relative; height: 18px; }
.tab + .tab { margin-left: -8px; }
.tab::before, .tab::after { content: ""; position: absolute; top: 0; bottom: 0; width: 50%; background: #f0f0f0; border-bottom: 1px solid #999; }
.tab::before { left: 4px; border-left: 1px solid #000; transform: skewX(24deg); }
.tab::after { right: 4px; border-right: 1px solid #000; transform: skewX(-24deg); }
.tab span { position: relative; z-index: 1; }
.tab.active { z-index: 1; font-weight: bold; font-size: 11px; }
.tab.active::before, .tab.active::after { background: #fff; }
.mini { margin: 1px 80px 0 0; }
.ref { height: 14px; margin-right: 5px; font: 11px/14px var(--ari); }

.statusbar { display: flex; align-items: stretch; height: 20px; padding-left: 2px; background: linear-gradient(90deg, #e4ecf7, #eef3fb 40%); font-size: 11px; line-height: 20px; }
.cell { margin: 1px 0 0 3px; border: 1px solid #8ea9cf; border-bottom: 0; text-align: center; line-height: 18px; }
.big { width: 74px; }
.cap { width: 28px; }
.num, .end { width: 33px; }
</style>
